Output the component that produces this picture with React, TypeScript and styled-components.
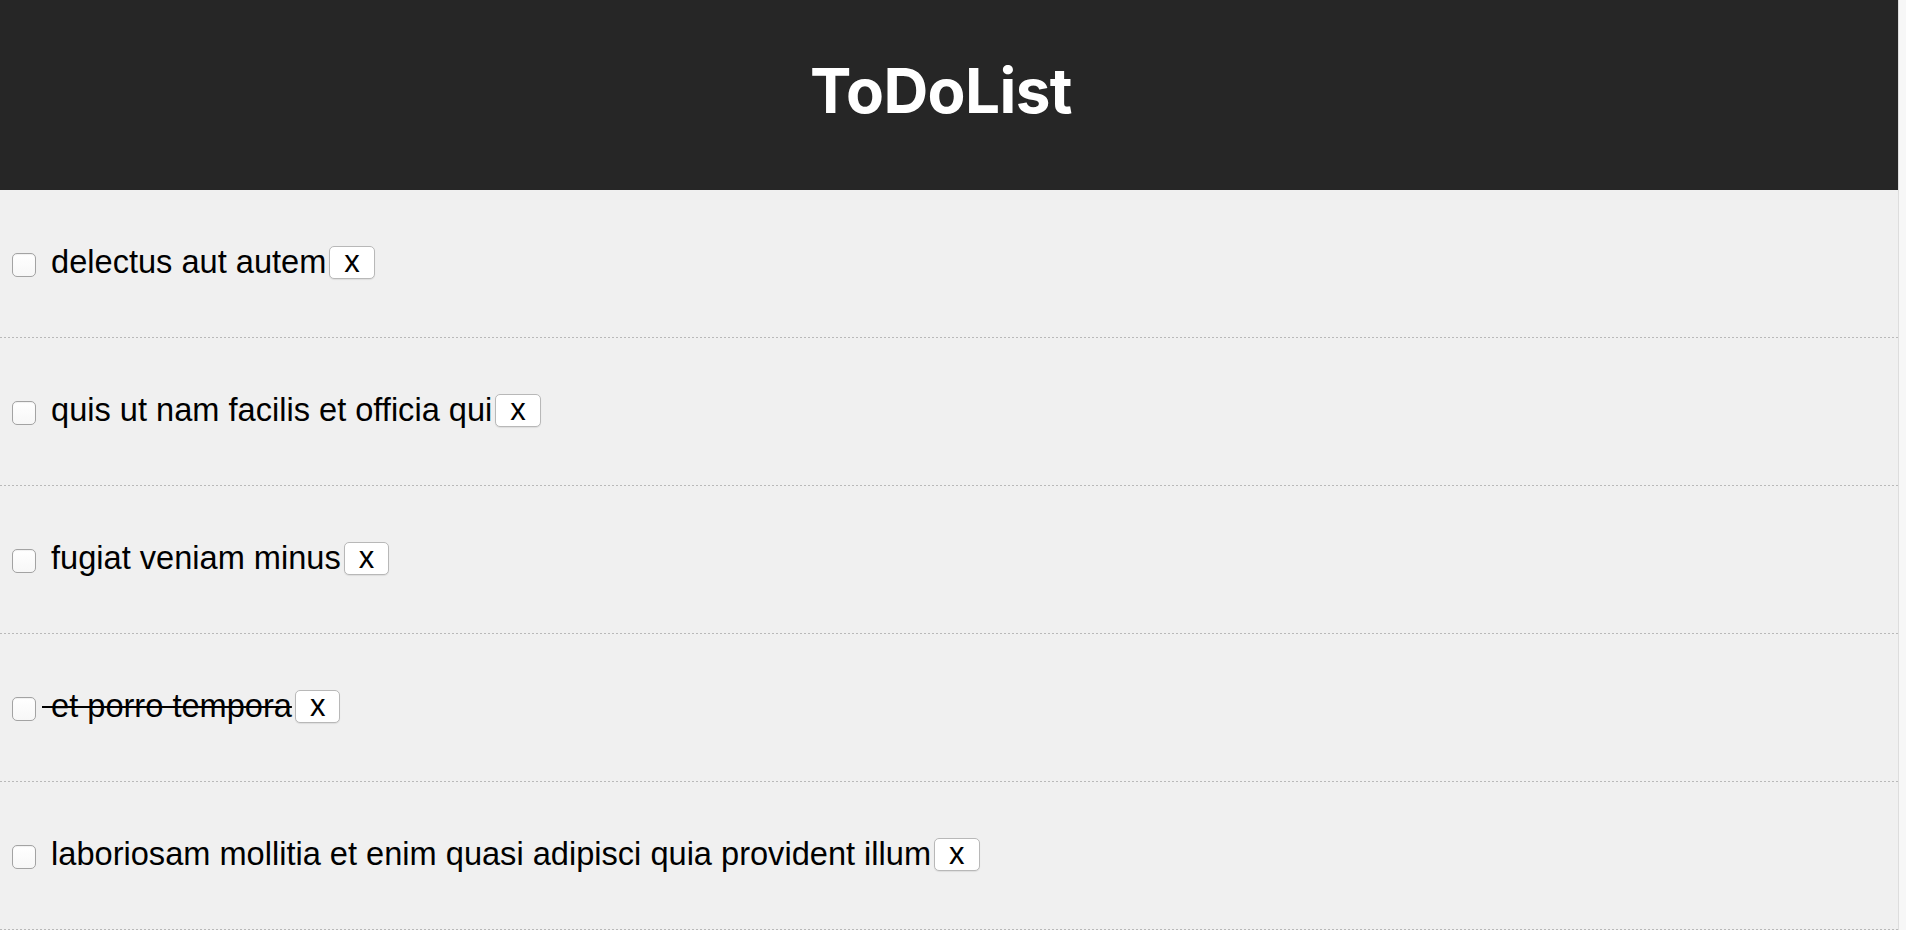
import React, { useState } from "react";
import styled, { createGlobalStyle } from "styled-components";

const GlobalStyle = createGlobalStyle`
  html, body {
    margin: 0;
    padding: 0;
    background: #f7f7f7;
    overflow: hidden;
  }
  body {
    font-family: "Liberation Sans", Arial, sans-serif;
  }
`;

const Page = styled.div`
  margin-right: 7px;
  border-right: 1px solid #dddddd;
  background: #f0f0f0;
  min-height: 930px;
`;

const Header = styled.header`
  box-sizing: border-box;
  height: 190px;
  padding: 0 16px 10px 0;
  background: #262626;
  display: flex;
  align-items: center;
  justify-content: center;
`;

const Title = styled.h1`
  margin: 0;
  color: #ffffff;
  font-family: Inter, "Liberation Sans", sans-serif;
  font-weight: 700;
  font-size: 62px;
  letter-spacing: -0.6px;
`;

const List = styled.ul`
  list-style: none;
  margin: 0;
  padding: 0;
`;

const Item = styled.li`
  box-sizing: border-box;
  height: 148px;
  display: flex;
  align-items: center;
  padding-left: 12px;
  background-image: linear-gradient(to right, #b9b9b9 50%, transparent 50%);
  background-size: 4px 1px;
  background-repeat: repeat-x;
  background-position: left bottom;
`;

const Check = styled.input.attrs({ type: "checkbox" })`
  appearance: none;
  -webkit-appearance: none;
  box-sizing: border-box;
  width: 24px;
  height: 24px;
  margin: 2px 0 0 0;
  border: 1px solid #a3a3a3;
  border-radius: 5px;
  background: linear-gradient(#ffffff, #f7f7f7);
  box-shadow: inset 0 1px 1px rgba(0, 0, 0, 0.06);
  flex: none;
`;

const Label = styled.span<{ $done: boolean }>`
  white-space: pre;
  font-size: 32.6px;
  color: #000000;
  padding: 0 0 5px 6px;
  text-decoration: ${(p) => (p.$done ? "line-through" : "none")};
  text-decoration-thickness: 2px;
`;

const RemoveButton = styled.button`
  box-sizing: border-box;
  height: 33px;
  margin: 0 0 3px 3px;
  padding: 0 14px 2px;
  border: 1px solid #b8b8b8;
  border-radius: 5px;
  background: #ffffff;
  box-shadow: 0 1px 1px rgba(0, 0, 0, 0.08);
  font-family: "Liberation Sans", Arial, sans-serif;
  font-size: 31px;
  line-height: 29px;
  color: #000000;
  cursor: pointer;
`;

type Todo = { id: number; title: string; completed: boolean };

const initial: Todo[] = [
  { id: 1, title: "delectus aut autem", completed: false },
  { id: 2, title: "quis ut nam facilis et officia qui", completed: false },
  { id: 3, title: "fugiat veniam minus", completed: false },
  { id: 4, title: "et porro tempora", completed: true },
  {
    id: 5,
    title: "laboriosam mollitia et enim quasi adipisci quia provident illum",
    completed: false,
  },
];

export default function App() {
  const [todos, setTodos] = useState<Todo[]>(initial);
  return (
    <>
      <GlobalStyle />
      <Page>
        <Header>
          <Title>ToDoList</Title>
        </Header>
        <List>
          {todos.map((t) => (
            <Item key={t.id}>
              <Check
                checked={false}
                onChange={() =>
                  setTodos((all) =>
                    all.map((x) => (x.id === t.id ? { ...x, completed: !x.completed } : x))
                  )
                }
              />
              <Label $done={t.completed}>{" " + t.title}</Label>
              <RemoveButton onClick={() => setTodos((all) => all.filter((x) => x.id !== t.id))}>
                x
              </RemoveButton>
            </Item>
          ))}
        </List>
      </Page>
    </>
  );
}
